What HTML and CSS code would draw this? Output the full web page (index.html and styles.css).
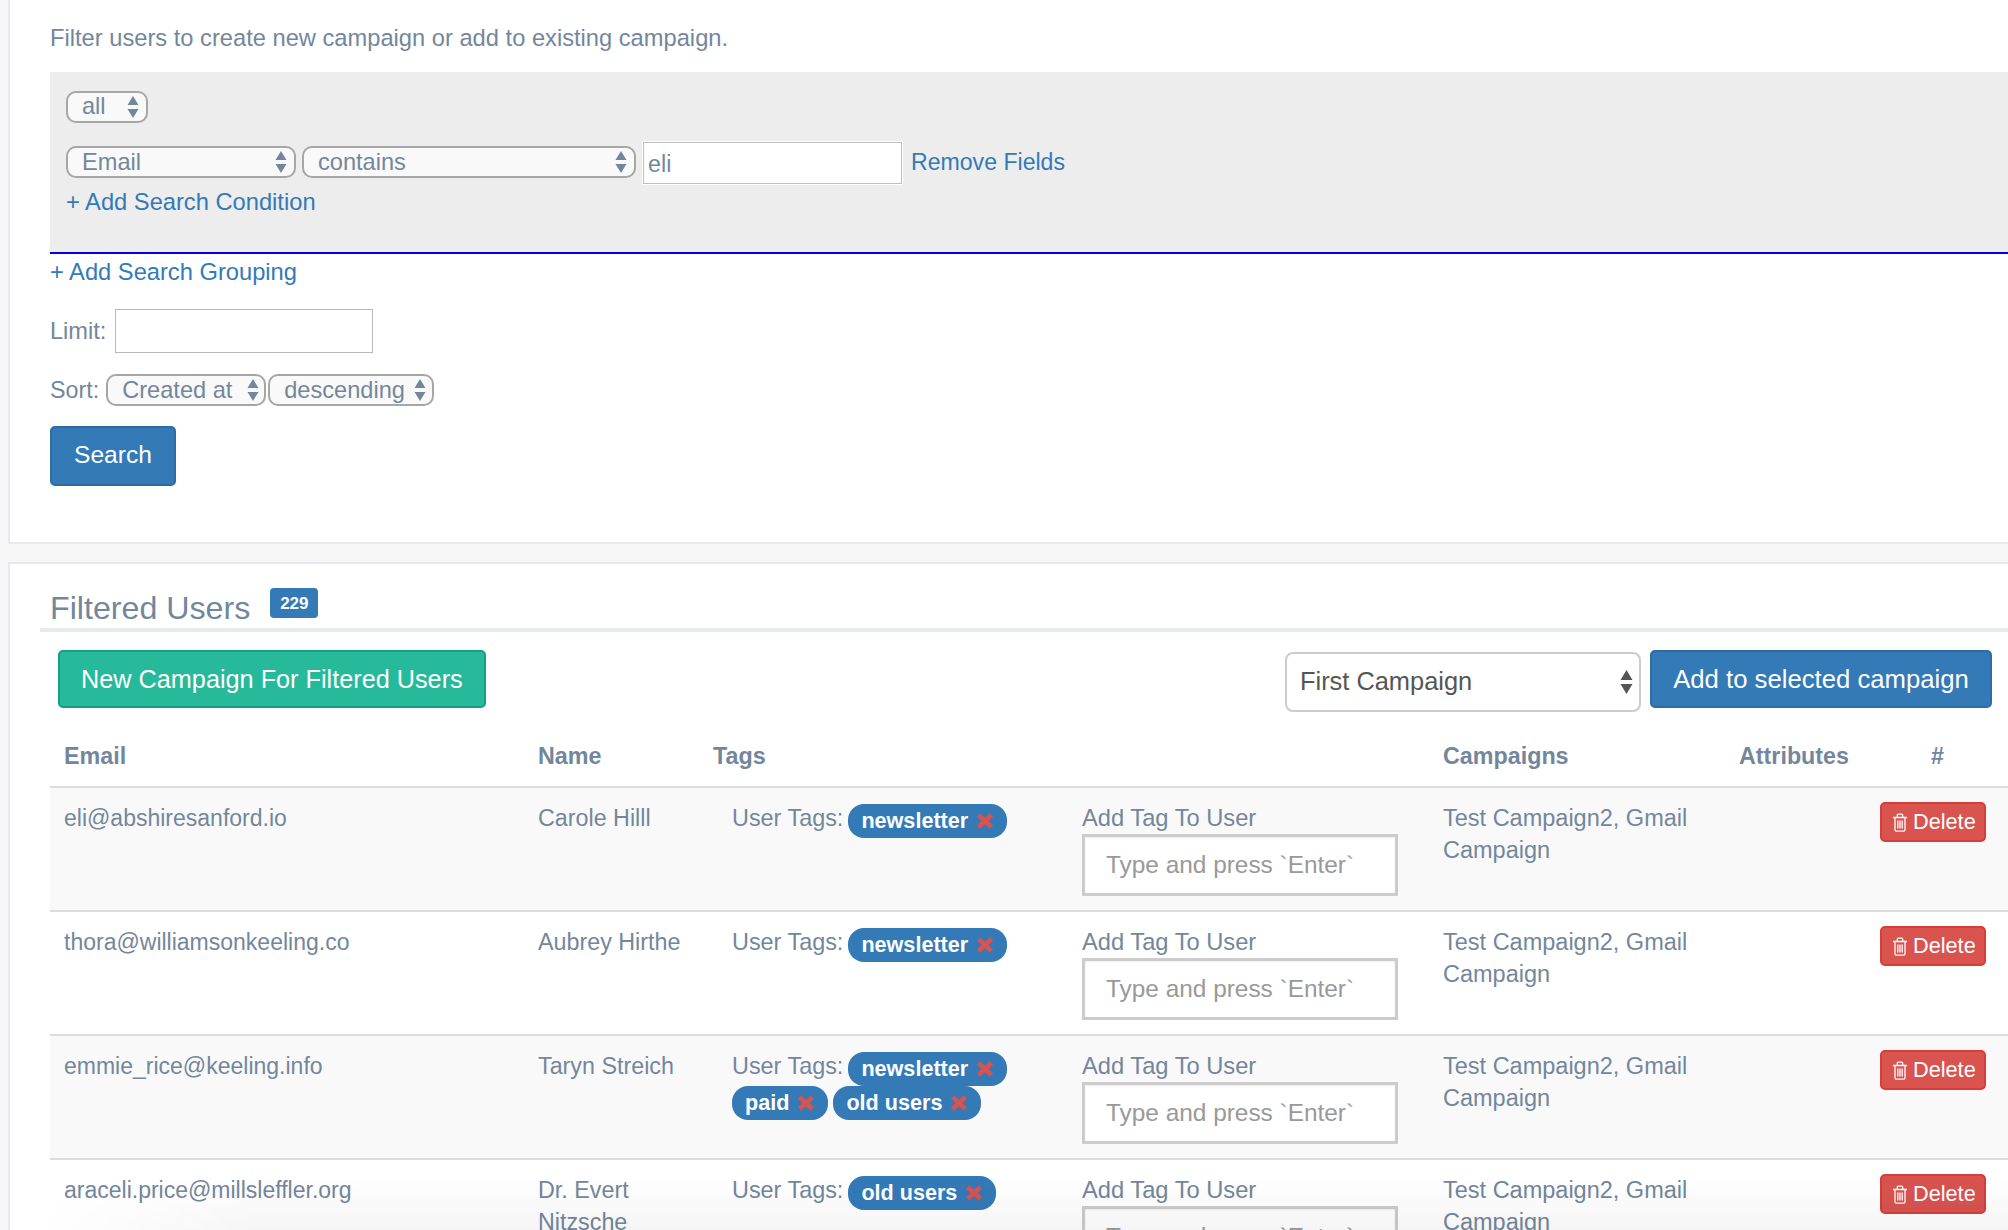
FILE: index.html
```html
<!DOCTYPE html>
<html lang="en">
<head>
    <meta charset="UTF-8">
    <meta name="viewport" content="width=device-width, initial-scale=1.0">
    <title>Filter Users</title>
    <link rel="stylesheet" href="styles.css">
</head>
<body>
    <svg class="icon-defs" width="0" height="0">
        <symbol id="icon-x" viewBox="0 0 18 16">
            <path d="M2.5 2 15.5 14M15.5 2 2.5 14" fill="none" stroke="currentColor" stroke-width="4.6"/>
        </symbol>
        <symbol id="icon-trash" viewBox="0 0 16 19">
            <path d="M1 4.5h14M3 4.5v12.2c0 .9.6 1.5 1.4 1.5h7.2c.8 0 1.4-.6 1.4-1.5V4.5M5.3 4.5V2.4c0-.7.5-1.3 1.2-1.3h3c.7 0 1.2.6 1.2 1.3v2.1M5.8 7.5v8M8 7.5v8M10.2 7.5v8" fill="none" stroke="currentColor" stroke-width="1.3"/>
        </symbol>
    </svg>

    <section class="panel panel-search">
        <p class="intro">Filter users to create new campaign or add to existing campaign.</p>
        <div class="query-box">
            <div class="query-match">
                <select class="native w-all"><option>all</option></select>
            </div>
            <div class="condition">
                <select class="native w-field"><option>Email</option></select>
                <select class="native w-op"><option>contains</option></select>
                <input class="plain-input w-value" type="text" value="eli">
                <a href="#" class="remove-link">Remove Fields</a>
            </div>
            <a href="#" class="add-link">+ Add Search Condition</a>
        </div>
        <a href="#" class="add-link add-grouping">+ Add Search Grouping</a>
        <div class="form-row limit-row">
            <label for="limit">Limit:</label>
            <input class="plain-input w-limit" id="limit" type="text">
        </div>
        <div class="form-row sort-row">
            <label>Sort:</label>
            <select class="native w-sort"><option>Created at</option></select>
            <select class="native w-dir"><option>descending</option></select>
        </div>
        <button class="btn btn-primary btn-search">Search</button>
    </section>

    <section class="panel panel-users">
        <div class="panel-title">
            <h2>Filtered Users</h2>
            <span class="badge">229</span>
        </div>
        <div class="toolbar">
            <button class="btn btn-success">New Campaign For Filtered Users</button>
            <div class="toolbar-right">
                <select class="campaign-select"><option>First Campaign</option></select>
                <button class="btn btn-primary btn-add">Add to selected campaign</button>
            </div>
        </div>
        <table class="users">
            <colgroup>
                <col class="col-email"><col class="col-name"><col class="col-tags">
                <col class="col-campaigns"><col class="col-attrs"><col class="col-actions">
            </colgroup>
            <thead>
                <tr>
                    <th>Email</th><th>Name</th><th>Tags</th><th>Campaigns</th><th>Attributes</th><th class="th-actions">#</th>
                </tr>
            </thead>
            <tbody>
                <tr>
                    <td class="email">eli@abshiresanford.io</td>
                    <td>Carole Hilll</td>
                    <td>
                        <div class="tag-cell">
                            <div class="user-tags">
                                <span class="tags-label">User Tags:</span>
                                <span class="pill">newsletter <svg class="pill-x"><use href="#icon-x"/></svg></span>
                            </div>
                            <div class="add-tag">
                                <div>Add Tag To User</div>
                                <input class="tag-input" type="text" placeholder="Type and press `Enter`">
                            </div>
                        </div>
                    </td>
                    <td class="campaigns">Test Campaign2, Gmail Campaign</td>
                    <td></td>
                    <td><button class="btn-delete"><svg class="trash"><use href="#icon-trash"/></svg>Delete</button></td>
                </tr>
                <tr>
                    <td class="email">thora@williamsonkeeling.co</td>
                    <td>Aubrey Hirthe</td>
                    <td>
                        <div class="tag-cell">
                            <div class="user-tags">
                                <span class="tags-label">User Tags:</span>
                                <span class="pill">newsletter <svg class="pill-x"><use href="#icon-x"/></svg></span>
                            </div>
                            <div class="add-tag">
                                <div>Add Tag To User</div>
                                <input class="tag-input" type="text" placeholder="Type and press `Enter`">
                            </div>
                        </div>
                    </td>
                    <td class="campaigns">Test Campaign2, Gmail Campaign</td>
                    <td></td>
                    <td><button class="btn-delete"><svg class="trash"><use href="#icon-trash"/></svg>Delete</button></td>
                </tr>
                <tr>
                    <td class="email">emmie_rice@keeling.info</td>
                    <td>Taryn Streich</td>
                    <td>
                        <div class="tag-cell">
                            <div class="user-tags">
                                <span class="tags-label">User Tags:</span>
                                <span class="pill">newsletter <svg class="pill-x"><use href="#icon-x"/></svg></span>
                                <span class="pill">paid <svg class="pill-x"><use href="#icon-x"/></svg></span>
                                <span class="pill">old users <svg class="pill-x"><use href="#icon-x"/></svg></span>
                            </div>
                            <div class="add-tag">
                                <div>Add Tag To User</div>
                                <input class="tag-input" type="text" placeholder="Type and press `Enter`">
                            </div>
                        </div>
                    </td>
                    <td class="campaigns">Test Campaign2, Gmail Campaign</td>
                    <td></td>
                    <td><button class="btn-delete"><svg class="trash"><use href="#icon-trash"/></svg>Delete</button></td>
                </tr>
                <tr>
                    <td class="email">araceli.price@millsleffler.org</td>
                    <td>Dr. Evert Nitzsche</td>
                    <td>
                        <div class="tag-cell">
                            <div class="user-tags">
                                <span class="tags-label">User Tags:</span>
                                <span class="pill">old users <svg class="pill-x"><use href="#icon-x"/></svg></span>
                            </div>
                            <div class="add-tag">
                                <div>Add Tag To User</div>
                                <input class="tag-input" type="text" placeholder="Type and press `Enter`">
                            </div>
                        </div>
                    </td>
                    <td class="campaigns">Test Campaign2, Gmail Campaign</td>
                    <td></td>
                    <td><button class="btn-delete"><svg class="trash"><use href="#icon-trash"/></svg>Delete</button></td>
                </tr>
            </tbody>
        </table>
    </section>

    <div class="bottom-fade"></div>
</body>
</html>
```

FILE: styles.css
```css
html, body {
    height: 100%;
    overflow: hidden;
}
body {
    margin: 0;
    padding: 0;
    background-color: #f7f7f7;
    color: #73879c;
    font-family: "Liberation Sans", Arial, sans-serif;
    font-size: 23.3px;
    line-height: 32px;
}
a {
    color: #337ab7;
    text-decoration: none;
}
.icon-defs {
    position: absolute;
}

/* panels run off the right side of the window */
.panel {
    margin: 0 -40px 18px 8px;
    background-color: #fff;
    border: 2px solid #e6e9ed;
    border-right: 0;
}
.panel-search {
    border-top: 0;
    padding: 22px 0 56px 40px;
}
.intro {
    margin: 0 0 18px;
    font-size: 23.7px;
}
.query-box {
    height: 162px;
    padding: 18px 0 0 16px;
    background-color: #ededed;
    border-bottom: 2px solid #0000e0;
}
.query-match {
    height: 32px;
    margin-bottom: 19px;
}
.condition {
    display: flex;
    align-items: center;
    height: 44px;
}
.native {
    appearance: none;
    -webkit-appearance: none;
    box-sizing: border-box;
    height: 32px;
    margin: 0;
    padding: 0 0 1px 14px;
    background: #f9f9f9 url("data:image/svg+xml,%3Csvg xmlns='http://www.w3.org/2000/svg' width='12' height='22'%3E%3Cpath d='M6 0l5.5 9H.5zM6 22L.5 13h11z' fill='%2373879c'/%3E%3C/svg%3E") no-repeat right 7px center;
    border: 2px solid #a6a6a6;
    border-radius: 10px;
    color: #73879c;
    font-family: inherit;
    font-size: 23.6px;
}
.w-all { width: 82px; }
.w-field { width: 230px; margin: 0 6px 2px 0; }
.w-op { width: 334px; margin: 0 6px 2px 0; }
.w-sort { width: 160px; margin-right: 2px; background-position: right 5px center; }
.w-dir { width: 166px; background-position: right 6px center; }
.plain-input {
    box-sizing: border-box;
    height: 44px;
    margin: 0;
    padding: 2px 4px 0;
    background-color: #fff;
    border: 1px solid #b8b8b8;
    color: #73879c;
    font-family: inherit;
    font-size: 23.3px;
}
.w-value {
    width: 261px;
    border: 2px solid #fff;
    outline: 1px solid #bdbdbd;
    outline-offset: -2px;
}
.w-limit { width: 258px; }
.remove-link {
    margin: 0 0 2px 8px;
    font-size: 23.1px;
}
.add-link {
    display: block;
    margin-top: 1px;
    font-size: 23.7px;
}
.add-grouping {
    margin-top: 2px;
}
.form-row {
    display: flex;
    align-items: center;
    margin-top: 21px;
}
.limit-row label {
    margin-right: 9px;
    font-size: 23.6px;
}
.sort-row label {
    margin-right: 7px;
}

.btn {
    box-sizing: border-box;
    height: 58px;
    margin: 0;
    padding: 0 21px;
    border: 2px solid;
    border-radius: 5px;
    color: #fff;
    font-family: inherit;
    font-size: 25.25px;
}
.btn-primary {
    background-color: #337ab7;
    border-color: #2e6da4;
}
.btn-success {
    background-color: #26b99a;
    border-color: #169f85;
}
.btn-search {
    display: block;
    width: 126px;
    height: 60px;
    padding: 0 0 2px;
    margin-top: 20px;
    font-size: 24.6px;
}
.btn-add {
    width: 342px;
    padding: 0;
    font-size: 25.7px;
}

.panel-users {
    padding-bottom: 40px;
}
.panel-title {
    display: flex;
    align-items: flex-start;
    height: 40px;
    margin-left: 30px;
    padding: 24px 0 0 10px;
    border-bottom: 4px solid #e6e9ed;
}
.panel-title h2 {
    margin: 0;
    font-size: 32.2px;
    font-weight: 400;
    line-height: 40px;
}
.badge {
    width: 48px;
    height: 30px;
    margin-left: 20px;
    background-color: #337ab7;
    border-radius: 4px;
    color: #fff;
    font-size: 17px;
    font-weight: 700;
    line-height: 32px;
    text-align: center;
}
.toolbar {
    display: flex;
    justify-content: space-between;
    width: 1934px;
    margin: 18px 0 0 48px;
}
.toolbar-right {
    display: flex;
    align-items: flex-start;
}
.campaign-select {
    appearance: none;
    -webkit-appearance: none;
    box-sizing: border-box;
    width: 356px;
    height: 60px;
    margin: 2px 9px 0 0;
    padding: 0 0 2px 13px;
    background: #fff url("data:image/svg+xml,%3Csvg xmlns='http://www.w3.org/2000/svg' width='13' height='24'%3E%3Cpath d='M6.5 0l6 10H.5zM6.5 24L.5 14h12z' fill='%23555'/%3E%3C/svg%3E") no-repeat right 6px center;
    border: 2px solid #ccc;
    border-radius: 8px;
    color: #555;
    font-family: inherit;
    font-size: 25.4px;
}

.users {
    width: 1980px;
    margin: 0 0 0 40px;
    border-collapse: separate;
    border-spacing: 0;
    table-layout: fixed;
}
.col-email { width: 474px; }
.col-name { width: 175px; }
.col-tags { width: 730px; }
.col-campaigns { width: 296px; }
.col-attrs { width: 141px; }
.users th {
    height: 76px;
    padding: 14px 0 0 14px;
    box-sizing: border-box;
    border-bottom: 2px solid #ddd;
    font-size: 23.3px;
    font-weight: 700;
    text-align: left;
}
.users .th-actions {
    padding-left: 65px;
}
.users td {
    box-sizing: border-box;
    height: 124px;
    padding: 14px 0 14px 14px;
    border-bottom: 2px solid #ddd;
    vertical-align: top;
}
.users tbody tr:nth-child(odd) td {
    background-color: #f9f9f9;
}
.users .email {
    font-size: 23px;
}
.users .campaigns {
    font-size: 23.5px;
}
.tag-cell {
    display: flex;
}
.user-tags {
    box-sizing: border-box;
    display: flex;
    flex-wrap: wrap;
    align-content: flex-start;
    column-gap: 5px;
    width: 350px;
    margin-left: 19px;
    padding: 2px 48px 0 0;
}
.tags-label {
    margin-top: -2px;
    font-size: 23.4px;
}
.pill {
    display: flex;
    align-items: center;
    height: 34px;
    padding: 0 13px;
    background-color: #337ab7;
    border-radius: 16px;
    color: #fff;
    font-size: 21.6px;
    font-weight: 700;
    line-height: 34px;
    white-space: pre;
}
.pill-x {
    width: 18px;
    height: 16px;
    margin-left: 2px;
    color: #d9534f;
}
.add-tag {
    font-size: 23.7px;
}
.tag-input {
    box-sizing: border-box;
    display: block;
    width: 316px;
    height: 62px;
    margin: 0;
    padding: 0 21px;
    background-color: #fff;
    border: 3px solid #ccc;
    box-shadow: inset 0 1px 2px rgba(0, 0, 0, .08);
    font-family: inherit;
    font-size: 24.4px;
}
.tag-input::placeholder {
    color: #999;
    opacity: 1;
}
.btn-delete {
    display: flex;
    align-items: center;
    box-sizing: border-box;
    width: 106px;
    height: 40px;
    margin: 0;
    padding: 0 0 0 10px;
    background-color: #d9534f;
    border: 2px solid #d43f3a;
    border-radius: 5px;
    color: #fff;
    font-family: inherit;
    font-size: 21.7px;
}
.trash {
    width: 16px;
    height: 19px;
    margin-right: 5px;
}

/* soft window shadow along the lower edge of the capture */
.bottom-fade {
    position: fixed;
    left: 40px;
    right: 0;
    bottom: 0;
    height: 55px;
    background: linear-gradient(rgba(0, 0, 0, 0), rgba(0, 0, 0, .04));
    -webkit-mask-image: linear-gradient(to right, transparent, #000 220px);
    mask-image: linear-gradient(to right, transparent, #000 220px);
    pointer-events: none;
}
```
